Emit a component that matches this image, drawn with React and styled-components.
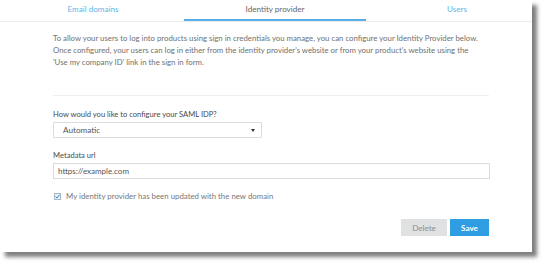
import React from "react";
import styled, { createGlobalStyle } from "styled-components";

const Global = createGlobalStyle`
  html, body { margin: 0; padding: 0; background: #fff; }
  body { font-family: Lato, "Open Sans", sans-serif; }
  * { box-sizing: border-box; }
`;

const Page = styled.div`
  width: 556px;
  height: 268px;
  overflow: hidden;
  background: #fff;
`;

const Card = styled.div`
  width: 532px;
  height: 252px;
  background: #fff;
  box-shadow: 5px 5px 4px rgba(0, 0, 0, 0.5);
  display: flex;
  flex-direction: column;
  overflow: hidden;
`;

const Tabs = styled.div`
  display: flex;
  height: 22px;
  padding-left: 2px;
  border-bottom: 1px solid #ececec;
`;

const Tab = styled.div`
  flex: 0 0 182px;
  text-align: center;
  font-size: 8.1px;
  line-height: 18px;
  color: ${(p) => (p.$active ? "#666" : "#5db4ea")};
  border-bottom: 2px solid ${(p) => (p.$active ? "#57aee6" : "transparent")};
`;

const Body = styled.div`
  padding: 10px 43px 0 53px;
  display: flex;
  flex-direction: column;
`;

const Intro = styled.p`
  margin: 0;
  font-size: 7.8px;
  line-height: 12px;
  color: #707070;
  padding-bottom: 27px;
  border-bottom: 1px solid #efefef;
  width: 436px;
`;

const Label = styled.div`
  margin-top: ${(p) => p.$mt}px;
  font-size: 7.6px;
  line-height: 12px;
  color: #4a4a4a;
`;

const SelectBox = styled.div`
  margin-top: 2px;
  width: 209px;
  height: 16px;
  border: 1px solid #dcdcdc;
  border-radius: 1px;
  display: flex;
  align-items: center;
  justify-content: space-between;
  padding: 0 6px 0 9px;
  font-size: 8.2px;
  color: #555;
`;

const Arrow = styled.span`
  width: 0;
  height: 0;
  border-left: 2px solid transparent;
  border-right: 2px solid transparent;
  border-top: 3px solid #333;
`;

const Input = styled.div`
  margin-top: 2px;
  width: 437px;
  height: 16px;
  border: 1px solid #dcdcdc;
  display: flex;
  align-items: center;
  padding: 0 4px;
  font-size: 8px;
  color: #555;
`;

const CheckRow = styled.div`
  margin-top: 11px;
  display: flex;
  align-items: center;
  gap: 5px;
  font-size: 7.85px;
  line-height: 12px;
  color: #777;
  padding-left: 1px;
`;

const Box = styled.span`
  width: 7px;
  height: 7px;
  border: 1px solid #a9b7c4;
  background: #eef3f8;
  display: inline-flex;
  align-items: center;
  justify-content: center;
`;

const Actions = styled.div`
  margin-top: 17px;
  width: 436px;
  display: flex;
  justify-content: flex-end;
  gap: 3px;
`;

const Button = styled.div`
  height: 17px;
  width: ${(p) => p.$w}px;
  display: flex;
  align-items: center;
  justify-content: center;
  font-size: 8.1px;
  background: ${(p) => (p.$primary ? "#2e9de2" : "#dfe1e3")};
  color: ${(p) => (p.$primary ? "#fff" : "#8a8f95")};
  font-weight: ${(p) => (p.$primary ? 700 : 400)};
`;

export default function App() {
  return (
    <Page>
      <Global />
      <Card>
        <Tabs>
          <Tab>Email domains</Tab>
          <Tab $active>Identity provider</Tab>
          <Tab>Users</Tab>
        </Tabs>
        <Body>
          <Intro>
            To allow your users to log into products using sign in credentials you manage, you can configure your Identity Provider below.
            <br />
            Once configured, your users can log in either from the identity provider's website or from your product's website using the
            <br />
            'Use my company ID' link in the sign in form.
          </Intro>
          <Label $mt={12}>How would you like to configure your SAML IDP?</Label>
          <SelectBox>
            <span>Automatic</span>
            <Arrow />
          </SelectBox>
          <Label $mt={11}>Metadata url</Label>
          <Input>https://example.com</Input>
          <CheckRow>
            <Box>
              <svg width="5" height="5" viewBox="0 0 5 5">
                <path d="M0.5 2.5 L2 4 L4.5 0.8" stroke="#3a7fc0" strokeWidth="1" fill="none" />
              </svg>
            </Box>
            My identity provider has been updated with the new domain
          </CheckRow>
          <Actions>
            <Button $w={46}>Delete</Button>
            <Button $w={39} $primary>Save</Button>
          </Actions>
        </Body>
      </Card>
    </Page>
  );
}
